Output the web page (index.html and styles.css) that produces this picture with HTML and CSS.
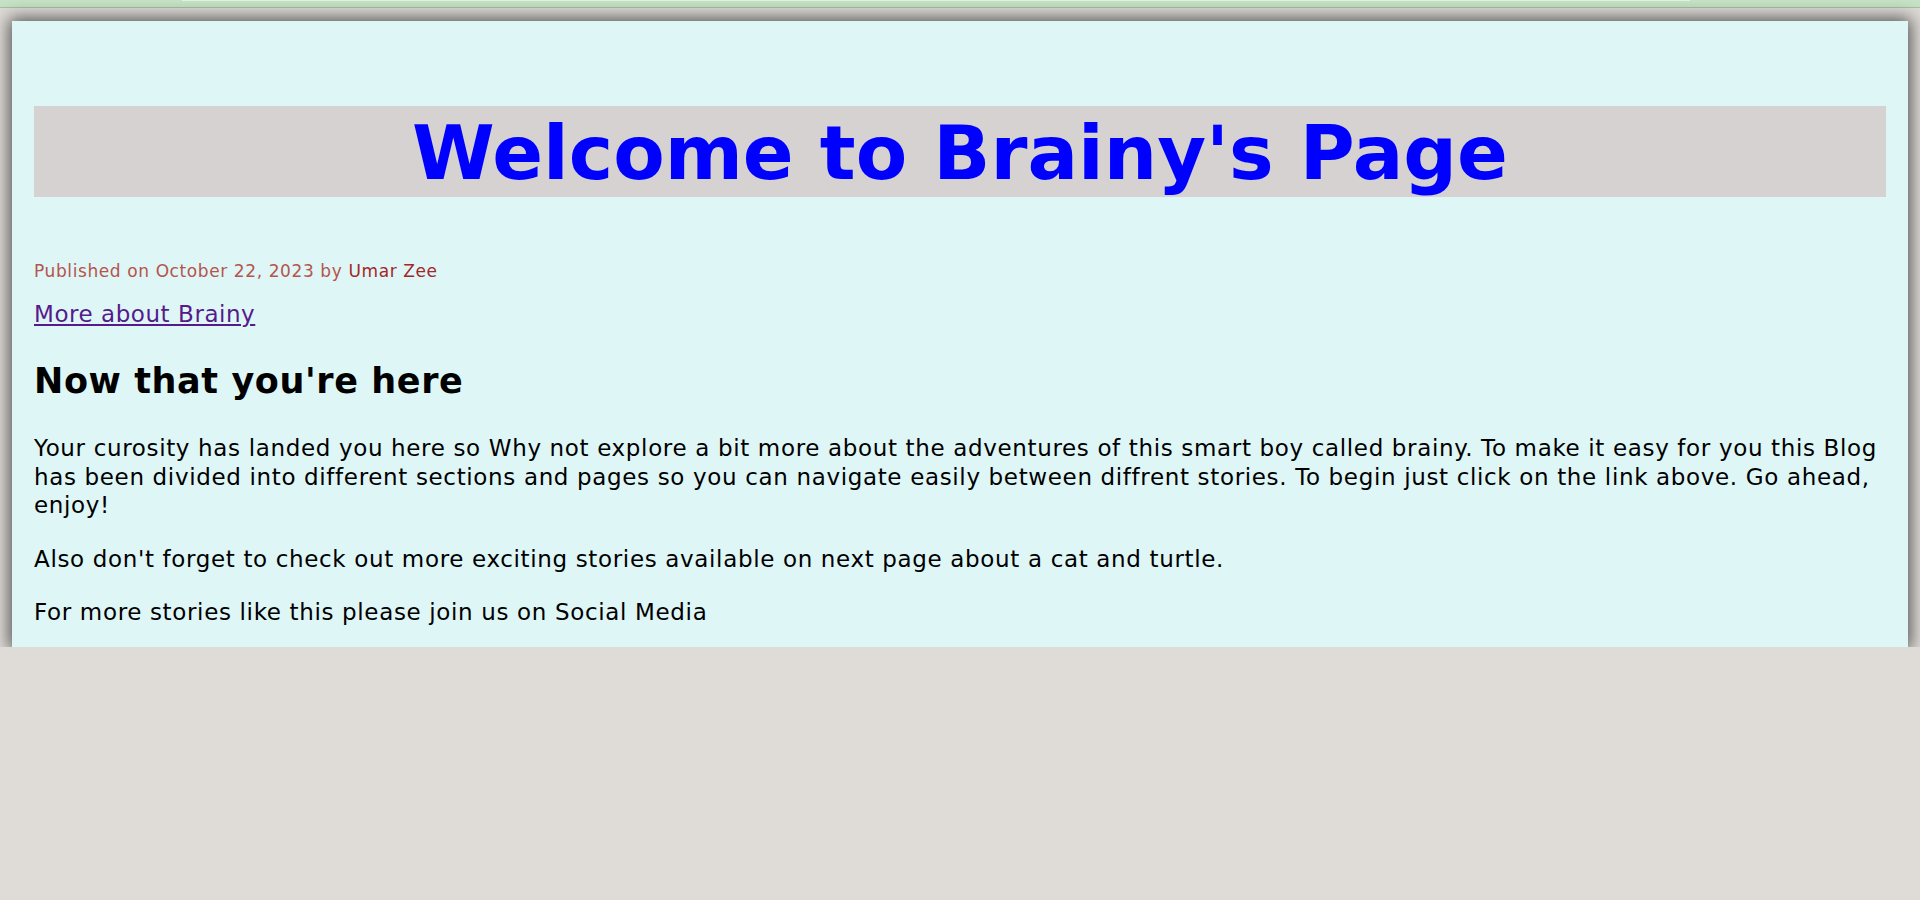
FILE: index.html
```html
<!DOCTYPE html>
<html lang="en">
<head>
<meta charset="utf-8">
<title>Brainy's Page</title>
<link rel="stylesheet" href="styles.css">
</head>
<body>
<div class="topbar"><div class="topbar-tab"></div></div>
<main class="page">
  <header class="banner">
    <h1 class="banner-title">Welcome to Brainy's Page</h1>
  </header>
  <p class="meta">Published on October 22, 2023 by <span class="author">Umar Zee</span></p>
  <p class="more"><a class="more-link" href="#">More about Brainy</a></p>
  <h2 class="section-title">Now that you're here</h2>
  <p class="text">Your curosity has landed you here so Why not explore a bit more about the adventures of this smart boy called brainy. To make it easy for you this Blog has been divided into different sections and pages so you can navigate easily between diffrent stories. To begin just click on the link above. Go ahead, enjoy!</p>
  <p class="text">Also don't forget to check out more exciting stories available on next page about a cat and turtle.</p>
  <p class="text">For more stories like this please join us on Social Media</p>
</main>
</body>
</html>
```

FILE: styles.css
```css
html, body {
  margin: 0;
  padding: 0;
  background: #dfdcd8;
  font-family: "DejaVu Sans", Verdana, sans-serif;
}

.topbar {
  height: 7px;
  background: #c5e2c5;
  border-bottom: 1px solid #a3c2a3;
}

.topbar-tab {
  margin-left: 182px;
  width: 1508px;
  height: 1px;
  background: #e6f1e6;
}

.page {
  display: flow-root;
  margin: 13px 12px 0;
  padding: 0 22px;
  background: #dff6f7;
  box-shadow: 0 0 16px 3px rgba(0, 0, 0, 0.62);
}

.banner {
  margin-top: 85px;
  background: #d6d2d2;
  height: 91px;
}

.banner-title {
  margin: 0;
  padding-top: 4px;
  text-align: center;
  color: #0000ff;
  font-size: 75px;
  line-height: 87px;
  font-weight: bold;
}

.meta {
  margin: 64px 0 0;
  font-size: 17px;
  letter-spacing: 0.6px;
  color: #b5544c;
}

.author {
  color: #a32626;
}

.more {
  margin: 20px 0 0;
  font-size: 23px;
  letter-spacing: 0.55px;
}

.more-link {
  color: #551a8b;
}

.section-title {
  margin: 34px 0 0;
  font-size: 35px;
  letter-spacing: 0.6px;
  font-weight: bold;
  color: #000;
}

.text {
  margin: 33px 0 0;
  font-size: 23px;
  letter-spacing: 0.65px;
  line-height: 28.5px;
  color: #000;
}

.text + .text {
  margin-top: 25px;
}

.text:last-child {
  margin-bottom: 20px;
}
```
